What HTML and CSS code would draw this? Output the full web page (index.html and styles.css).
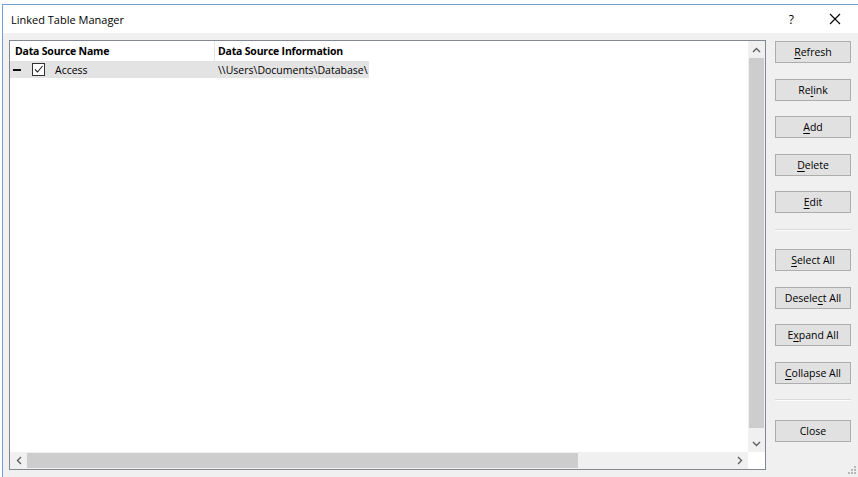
FILE: index.html
```html
<!DOCTYPE html>
<html lang="en">
<head>
  <meta charset="UTF-8">
  <title>Linked Table Manager</title>
  <link rel="stylesheet" href="styles.css">
</head>
<body>
  <div class="window">
    <div class="titlebar">
      <span class="title">Linked Table Manager</span>
      <div class="caption-buttons">
        <span class="help">?</span>
        <svg class="close-x" width="12" height="12" viewBox="0 0 12 12">
          <path d="M1 1 L11 11 M11 1 L1 11" stroke="#000" stroke-width="1.1" fill="none"/>
        </svg>
      </div>
    </div>

    <div class="content">
      <div class="listview">
        <div class="list-top">
          <div class="list-area">
            <div class="list-header">
              <div class="col col-name">Data Source Name</div>
              <div class="col col-info">Data Source Information</div>
            </div>
            <div class="list-row">
              <div class="row-hl">
                <span class="collapse-mark"></span>
                <span class="checkbox">
                  <svg width="11" height="11" viewBox="0 0 11 11">
                    <path d="M2 5.5 L4.5 8 L9.5 2" stroke="#222" stroke-width="1.1" fill="none"/>
                  </svg>
                </span>
                <span class="row-name">Access</span>
                <span class="row-info">\\Users\Documents\Database\</span>
              </div>
            </div>
          </div>
          <div class="vscroll">
            <div class="sb-btn">
              <svg width="9" height="6" viewBox="0 0 9 6"><path d="M1 5 L4.5 1.5 L8 5" stroke="#606060" stroke-width="1.4" fill="none"/></svg>
            </div>
            <div class="vthumb"></div>
            <div class="vtrack"></div>
            <div class="sb-btn">
              <svg width="9" height="6" viewBox="0 0 9 6"><path d="M1 1 L4.5 4.5 L8 1" stroke="#606060" stroke-width="1.4" fill="none"/></svg>
            </div>
          </div>
        </div>
        <div class="list-bottom">
          <div class="hscroll">
            <div class="sb-btn">
              <svg width="6" height="9" viewBox="0 0 6 9"><path d="M5 1 L1.5 4.5 L5 8" stroke="#606060" stroke-width="1.4" fill="none"/></svg>
            </div>
            <div class="hthumb"></div>
            <div class="htrack"></div>
            <div class="sb-btn">
              <svg width="6" height="9" viewBox="0 0 6 9"><path d="M1 1 L4.5 4.5 L1 8" stroke="#606060" stroke-width="1.4" fill="none"/></svg>
            </div>
          </div>
          <div class="corner"></div>
        </div>
      </div>

      <div class="side-buttons">
        <button class="btn"><u>R</u>efresh</button>
        <button class="btn">Re<u>l</u>ink</button>
        <button class="btn"><u>A</u>dd</button>
        <button class="btn"><u>D</u>elete</button>
        <button class="btn"><u>E</u>dit</button>
        <div class="separator"></div>
        <button class="btn"><u>S</u>elect All</button>
        <button class="btn">Desele<u>c</u>t All</button>
        <button class="btn">E<u>x</u>pand All</button>
        <button class="btn"><u>C</u>ollapse All</button>
        <div class="separator"></div>
        <button class="btn">Close</button>
      </div>
    </div>

    <div class="grip">
      <svg width="10" height="10" viewBox="0 0 10 10" fill="#b8b8b8">
        <rect x="8" y="0" width="2" height="2"/>
        <rect x="5" y="3" width="2" height="2"/><rect x="8" y="3" width="2" height="2"/>
        <rect x="2" y="6" width="2" height="2"/><rect x="5" y="6" width="2" height="2"/><rect x="8" y="6" width="2" height="2"/>
      </svg>
    </div>
  </div>
</body>
</html>
```

FILE: styles.css
```css
html, body {
  margin: 0;
  padding: 0;
  background: #fff;
}

body {
  font-family: "Open Sans", "Noto Sans", sans-serif;
  font-size: 10.5px;
  color: #000;
  width: 858px;
  height: 477px;
  overflow: hidden;
}

.window {
  position: relative;
  margin: 4px 0 0 2px;
  height: 473px;
  border-top: 1px solid #6f9fd6;
  border-left: 1px solid #6f9fd6;
  background: #f0f0f0;
  box-sizing: border-box;
}

.titlebar {
  height: 28px;
  background: #fff;
  display: flex;
  align-items: center;
  justify-content: space-between;
}

.title {
  margin-left: 8px;
  font-size: 11px;
}

.caption-buttons {
  display: flex;
  align-items: center;
  margin-right: 17px;
}

.help {
  font-size: 12px;
  margin-right: 35px;
}

.close-x {
  display: block;
}

.content {
  display: flex;
  padding: 7px 0 0 6px;
}

/* list view */
.listview {
  width: 757px;
  height: 430px;
  border: 1px solid #828790;
  box-sizing: border-box;
  background: #fff;
  display: flex;
  flex-direction: column;
}

.list-top {
  flex: 1;
  display: flex;
  min-height: 0;
}

.list-area {
  flex: 1;
  overflow: hidden;
}

.list-header {
  display: flex;
  height: 20px;
  align-items: center;
  font-weight: bold;
  letter-spacing: -0.2px;
}

.col {
  box-sizing: border-box;
  height: 100%;
  display: flex;
  align-items: center;
}

.col-name {
  width: 205px;
  padding-left: 5px;
  border-right: 1px solid #e5e5e5;
}

.col-info {
  padding-left: 3px;
}

.list-row {
  height: 17px;
  display: flex;
}

.row-hl {
  background: #e3e3e3;
  display: flex;
  align-items: center;
  padding-right: 1px;
}

.collapse-mark {
  width: 8px;
  height: 2px;
  background: #111;
  margin-left: 3px;
}

.checkbox {
  width: 11px;
  height: 11px;
  border: 1px solid #333;
  background: #fff;
  margin-left: 11px;
  display: flex;
}

.row-name {
  margin-left: 10px;
  width: 163px;
}

.row-info {
  white-space: nowrap;
}

/* scrollbars */
.vscroll {
  width: 17px;
  background: #f0f0f0;
  display: flex;
  flex-direction: column;
}

.sb-btn {
  width: 17px;
  height: 17px;
  display: flex;
  align-items: center;
  justify-content: center;
  flex-shrink: 0;
}

.vthumb {
  height: 370px;
  margin: 0 1px;
  background: #cdcdcd;
}

.vtrack {
  flex: 1;
}

.list-bottom {
  height: 17px;
  display: flex;
}

.hscroll {
  flex: 1;
  display: flex;
  background: #f0f0f0;
}

.hthumb {
  width: 551px;
  margin: 1px 0;
  background: #cdcdcd;
}

.htrack {
  flex: 1;
}

.corner {
  width: 17px;
  background: #fff;
}

/* buttons */
.side-buttons {
  width: 76px;
  margin-left: 9px;
  padding-top: 1px;
  display: flex;
  flex-direction: column;
  gap: 15.5px;
}

.btn {
  height: 22px;
  padding: 0;
  font-family: "Open Sans", "Noto Sans", sans-serif;
  font-size: 10.5px;
  color: #000;
  background: #e1e1e1;
  border: 1px solid #adadad;
}

.btn u {
  text-decoration-thickness: 1px;
  text-underline-offset: 2px;
}

.separator {
  height: 0;
  border-top: 1px solid #dadada;
  border-bottom: 1px solid #fcfcfc;
  margin-bottom: 3px;
}

.grip {
  position: absolute;
  right: 2px;
  bottom: 1px;
  line-height: 0;
}
```
